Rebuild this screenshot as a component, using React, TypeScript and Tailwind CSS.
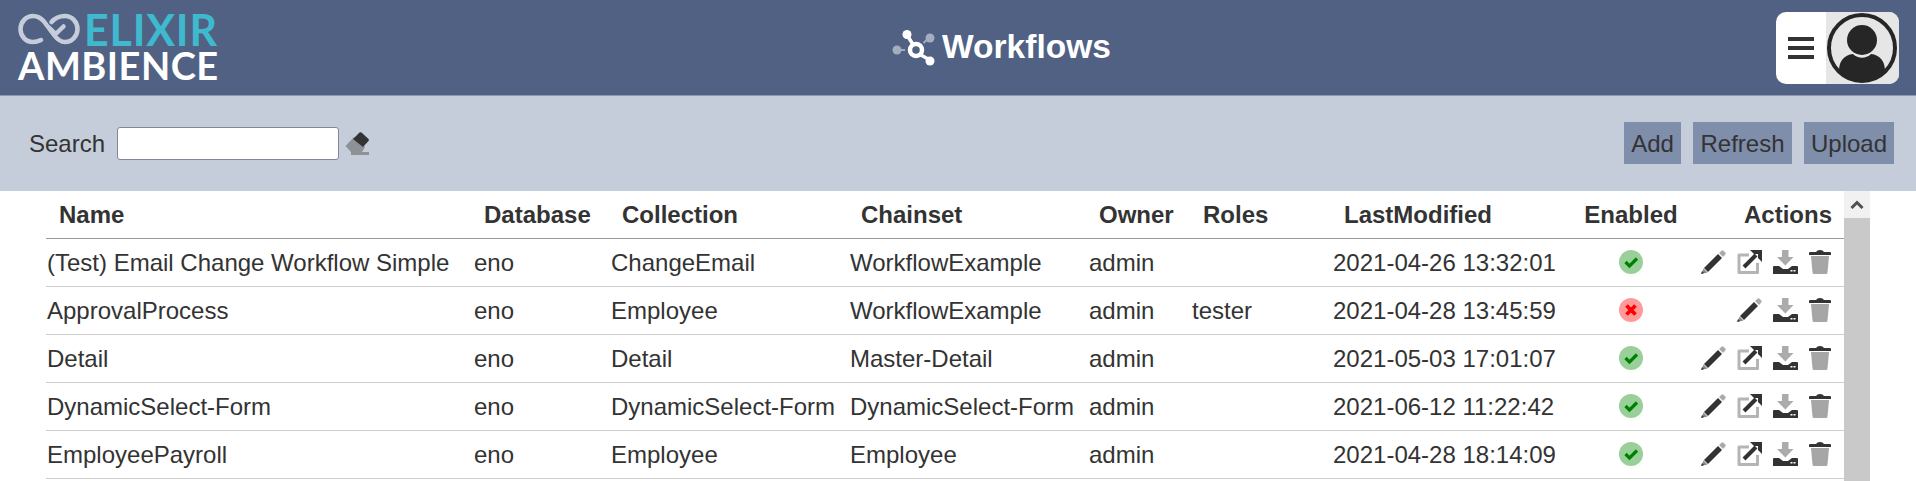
import React from 'react';

interface Workflow {
    name: string;
    database: string;
    collection: string;
    chainset: string;
    owner: string;
    roles: string;
    lastModified: string;
    enabled: boolean;
}

const workflows: Workflow[] = [
    { name: '(Test) Email Change Workflow Simple', database: 'eno', collection: 'ChangeEmail', chainset: 'WorkflowExample', owner: 'admin', roles: '', lastModified: '2021-04-26 13:32:01', enabled: true },
    { name: 'ApprovalProcess', database: 'eno', collection: 'Employee', chainset: 'WorkflowExample', owner: 'admin', roles: 'tester', lastModified: '2021-04-28 13:45:59', enabled: false },
    { name: 'Detail', database: 'eno', collection: 'Detail', chainset: 'Master-Detail', owner: 'admin', roles: '', lastModified: '2021-05-03 17:01:07', enabled: true },
    { name: 'DynamicSelect-Form', database: 'eno', collection: 'DynamicSelect-Form', chainset: 'DynamicSelect-Form', owner: 'admin', roles: '', lastModified: '2021-06-12 11:22:42', enabled: true },
    { name: 'EmployeePayroll', database: 'eno', collection: 'Employee', chainset: 'Employee', owner: 'admin', roles: '', lastModified: '2021-04-28 18:14:09', enabled: true },
];

const LogoMark = () => (
    <svg width="62" height="36" viewBox="0 0 62 36" fill="none" strokeLinecap="round" strokeLinejoin="round">
        <path d="M23 28 C20 29.5 18 30 15 30 C7.5 30 2.5 24 2.5 17 C2.5 10 8 4 15 4 C19.5 4 23 6 26 9.5 L36 23 C39 27 42 30 47 30 C54 30 59.5 24 59.5 17 C59.5 10 54 4 47 4 C42 4 37 6 33.5 10" stroke="#c5cddb" strokeWidth="4.5" />
        <path d="M31.5 16 L37.7 22 L45.5 14.5" stroke="#c5cddb" strokeWidth="4.5" />
    </svg>
);

const WorkflowMark = () => (
    <svg width="46" height="36" viewBox="0 0 46 36" fill="none">
        <path d="M3 20 H14 M27 17 L36 9" stroke="#a3adbf" strokeWidth="2" strokeDasharray="4 2" />
        <circle cx="5" cy="20" r="4.5" fill="#a3adbf" />
        <circle cx="38" cy="8" r="4.5" fill="#a3adbf" />
        <path d="M15 5 L22 16 M27 24 L38 30" stroke="#fff" strokeWidth="3.5" />
        <circle cx="15" cy="4.5" r="4.5" fill="#fff" />
        <circle cx="38" cy="31" r="4.5" fill="#fff" />
        <circle cx="24" cy="20" r="6" stroke="#fff" strokeWidth="4.5" />
    </svg>
);

const Avatar = () => (
    <svg width="72" height="72" viewBox="0 0 72 72">
        <circle cx="36" cy="36" r="33" fill="#e6e6e6" stroke="#262626" strokeWidth="4" />
        <circle cx="36" cy="28" r="15" fill="#262626" />
        <path d="M13 59 C13 49 18 43 27 42 C32 47 40 47 45 42 C54 43 59 49 59 59 C53 66 45 69 36 69 C27 69 19 66 13 59 Z" fill="#262626" />
    </svg>
);

const EraserIcon = () => (
    <svg width="25" height="23" viewBox="0 0 25 23">
        <path d="M0.5 14 L9 5 L20 15 L17 20 H6 Z" fill="#8e9196" />
        <rect x="6" y="20" width="18" height="3" fill="#8e9196" />
        <path d="M8 7 L14.5 0.5 Q15.5 0 16.5 0.5 L23.5 7 Q24.5 8 23.5 9 L18 15 Z" fill="#333" />
    </svg>
);

const PencilIcon = () => (
    <svg width="25" height="24" viewBox="0 0 25 24">
        <path d="M18 3 L20.5 0.7 Q21.5 0 22.5 0.7 L24.3 2.6 Q25 3.5 24.3 4.4 L22 7 Z" fill="#ababab" />
        <path d="M17 4 L21 8 L7 22 L3 18 Z" fill="#333" />
        <path d="M2.5 18.5 L6.5 22.5 L0.5 24 Z" fill="#8a8a8a" />
        <path d="M0 24 L1 21 L3 23 Z" fill="#333" />
    </svg>
);

const OpenIcon = () => (
    <svg width="25" height="24" viewBox="0 0 25 24" fill="none">
        <path d="M12 5 H2 V22.5 H20.5 V13" stroke="#b5b5b5" strokeWidth="3" strokeLinejoin="round" />
        <path d="M7 17 L19 5" stroke="#333" strokeWidth="4" />
        <path d="M13 0 H25 V12 L21 8 V4 H17 Z" fill="#333" />
    </svg>
);

const DownloadIcon = () => (
    <svg width="25" height="24" viewBox="0 0 25 24">
        <path d="M9 0 H15.5 V7 H20.5 L12.3 15.5 L4 7 H9 Z" fill="#ababab" />
        <path d="M0 17 Q0 16 1 16 H6 L10 19 H15 L19 16 H24 Q25 16 25 17 V24 H0 Z" fill="#333" />
        <rect x="17.5" y="20" width="2" height="1.5" fill="#fff" />
        <rect x="20.5" y="20" width="2" height="1.5" fill="#fff" />
    </svg>
);

const TrashIcon = () => (
    <svg width="22" height="24" viewBox="0 0 22 24">
        <path d="M0 3 Q0 2 1 2 H7 Q8 0 11 0 Q14 0 15 2 H21 Q22 2 22 3 V5 H0 Z" fill="#333" />
        <path d="M2 6 H20 L18.5 22.5 Q18.4 24 17 24 H5 Q3.6 24 3.5 22.5 Z" fill="#a6a6a6" />
    </svg>
);

const StatusIcon = ({ enabled }: { enabled: boolean }) => (
    <svg className="mx-auto" width="24" height="24" viewBox="0 0 24 24" fill="none">
        <circle cx="12" cy="12" r="12" fill={enabled ? '#99cf99' : '#ff9a9a'} />
        {enabled
            ? <path d="M6.5 12 L10.5 16 L18 8.5" stroke="#008000" strokeWidth="3.2" />
            : <path d="M7.5 7.5 L16.5 16.5 M16.5 7.5 L7.5 16.5" stroke="#ff0000" strokeWidth="3.8" />}
    </svg>
);

export default function App() {
    return (
        <div className="h-[481px] w-[1916px] overflow-hidden bg-white text-[24px] text-[#333] font-['Liberation_Sans',Arial,sans-serif]">
            {/* Top bar */}
            <header className="grid h-[96px] grid-cols-3 items-center border-b border-[#8d99b0] bg-[#506184] pl-[18px] pr-[17px]">
                <div className="mb-[4px] flex flex-col font-['Lato',sans-serif] font-bold">
                    <div className="flex h-[38px] items-center gap-[4px]">
                        <LogoMark />
                        <span className="text-[43px] leading-[36px] tracking-[0.8px] text-[#3fb9cd]">ELIXIR</span>
                    </div>
                    <span className="mt-[1px] h-[30px] text-[38px] leading-[30px] tracking-[0.5px] text-white">AMBIENCE</span>
                </div>
                <div className="flex items-center justify-center gap-[4px] pl-[86px]">
                    <WorkflowMark />
                    <span className="text-[33.5px] font-bold text-white">Workflows</span>
                </div>
                <div className="flex justify-end">
                    <div className="flex h-[72px] w-[123px] overflow-hidden rounded-[10px] bg-white">
                        <div className="flex w-[50px] flex-col justify-center gap-[5px] pl-[12px]">
                            <div className="h-[4px] w-[26px] bg-[#333]" />
                            <div className="h-[4px] w-[26px] bg-[#333]" />
                            <div className="h-[4px] w-[26px] bg-[#333]" />
                        </div>
                        <div className="flex-1 bg-[#e6e6e6]"><Avatar /></div>
                    </div>
                </div>
            </header>

            {/* Search and actions */}
            <div className="flex h-[95px] items-center justify-between bg-[#c5cddb] pb-[1px] pl-[29px] pr-[22px]">
                <div className="flex items-center">
                    <label className="mr-[12px] pt-[1px]">Search</label>
                    <input className="h-[33px] w-[222px] rounded-[3px] border border-[#85859b] bg-white" />
                    <span className="ml-[6px] mt-[1px]"><EraserIcon /></span>
                </div>
                <div className="flex gap-[12px]">
                    <button className="h-[42px] w-[57px] bg-[#7f8eab] pt-[1px]">Add</button>
                    <button className="h-[42px] w-[99px] bg-[#7f8eab] pt-[1px]">Refresh</button>
                    <button className="h-[42px] w-[90px] bg-[#7f8eab] pt-[1px]">Upload</button>
                </div>
            </div>

            {/* Workflow list */}
            <div className="flex pl-[46px]">
                <table className="h-fit w-[1798px] table-fixed border-collapse">
                    <colgroup>
                        <col className="w-[426px]" />
                        <col className="w-[137px]" />
                        <col className="w-[239px]" />
                        <col className="w-[239px]" />
                        <col className="w-[103px]" />
                        <col className="w-[141px]" />
                        <col className="w-[239px]" />
                        <col className="w-[122px]" />
                        <col className="w-[152px]" />
                    </colgroup>
                    <thead>
                        <tr className="h-[47px] border-b border-[#999] text-left font-bold">
                            <th className="pl-[13px] pt-[2px]">Name</th>
                            <th className="pl-[12px] pt-[2px]">Database</th>
                            <th className="pl-[13px] pt-[2px]">Collection</th>
                            <th className="pl-[13px] pt-[2px]">Chainset</th>
                            <th className="pl-[12px] pt-[2px]">Owner</th>
                            <th className="pl-[13px] pt-[2px]">Roles</th>
                            <th className="pl-[13px] pt-[2px]">LastModified</th>
                            <th className="pt-[2px] text-center">Enabled</th>
                            <th className="pr-[12px] pt-[2px] text-right">Actions</th>
                        </tr>
                    </thead>
                    <tbody>
                        {workflows.map(item => (
                            <tr key={item.name} className="h-[48px] border-b border-[#ccc]">
                                <td className="pl-[1px] pt-[2px]">{item.name}</td>
                                <td className="pl-[2px] pt-[2px]">{item.database}</td>
                                <td className="pl-[2px] pt-[2px]">{item.collection}</td>
                                <td className="pl-[2px] pt-[2px]">{item.chainset}</td>
                                <td className="pl-[2px] pt-[2px]">{item.owner}</td>
                                <td className="pl-[2px] pt-[2px]">{item.roles}</td>
                                <td className="pl-[2px] pt-[2px]">{item.lastModified}</td>
                                <td><StatusIcon enabled={item.enabled} /></td>
                                <td className="pr-[13px]">
                                    <div className="flex items-center justify-end gap-[11px]">
                                        <PencilIcon />
                                        {item.enabled && <OpenIcon />}
                                        <DownloadIcon />
                                        <TrashIcon />
                                    </div>
                                </td>
                            </tr>
                        ))}
                    </tbody>
                </table>
                {/* Scrollbar */}
                <div className="flex h-[290px] w-[26px] flex-col bg-[#c9c9c9]">
                    <div className="flex h-[27px] items-center justify-center bg-[#f1f1f1]">
                        <svg width="14" height="9" viewBox="0 0 14 9" fill="none">
                            <path d="M1.5 8 L7 2.5 L12.5 8" stroke="#505050" strokeWidth="3" />
                        </svg>
                    </div>
                </div>
            </div>
        </div>
    );
}
